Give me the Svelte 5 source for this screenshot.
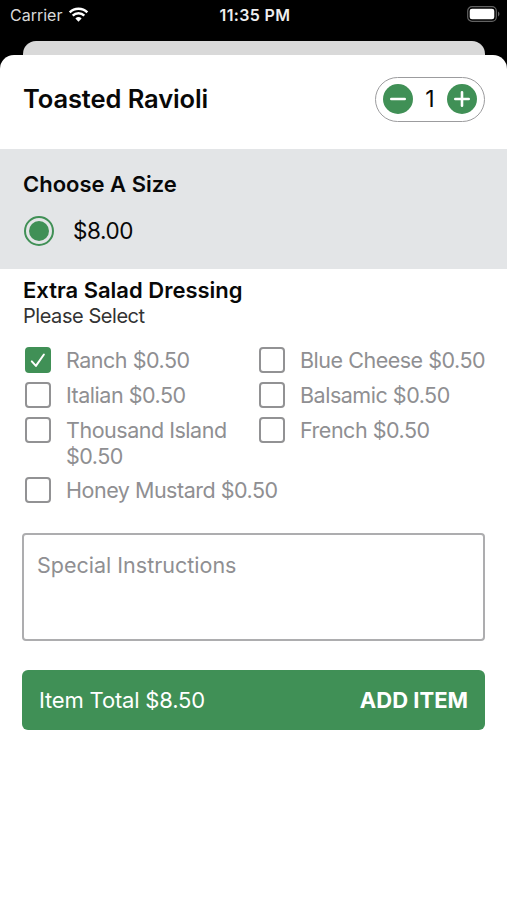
<script>
	let quantity = $state(1);
	let size = $state("regular");
	let instructions = $state("");

	let dressings = $state([
		{ name: "Ranch", price: 0.5, checked: true },
		{ name: "Blue Cheese", price: 0.5, checked: false },
		{ name: "Italian", price: 0.5, checked: false },
		{ name: "Balsamic", price: 0.5, checked: false },
		{ name: "Thousand Island", price: 0.5, checked: false },
		{ name: "French", price: 0.5, checked: false },
		{ name: "Honey Mustard", price: 0.5, checked: false, wide: true }
	]);

	const basePrice = 8;
	let extras = $derived(
		dressings.filter((d) => d.checked).reduce((sum, d) => sum + d.price, 0)
	);
	let total = $derived((basePrice + extras) * quantity);

	const money = (value) => "$" + value.toFixed(2);
</script>

<div class="screen">
	<div class="status">
		<div class="carrier">
			<span>Carrier</span>
			<svg width="21" height="15" viewBox="0 0 20 15">
				<path d="M1.2 5.3a12.6 12.6 0 0 1 17.6 0" />
				<path d="M4.2 8.6a8.3 8.3 0 0 1 11.6 0" />
				<path class="dot" d="M6.9 11.4a4.5 4.5 0 0 1 6.2 0L10 14.7z" />
			</svg>
		</div>
		<span class="time">11:35 PM</span>
		<div class="power">
			<svg width="33" height="16" viewBox="0 0 33 16">
				<rect class="shell" x="0.7" y="0.7" width="28.6" height="14.6" rx="4.3" />
				<rect class="charge" x="2.7" y="2.7" width="24.6" height="10.6" rx="2.3" />
				<path class="charge-tip" d="M31 5.6c1.9.8 1.9 4 0 4.8z" />
			</svg>
		</div>
	</div>
	<div class="behind"></div>

	<div class="sheet">
		<header>
			<h1>Toasted Ravioli</h1>
			<div class="stepper">
				<button aria-label="Remove one" onclick={() => (quantity = Math.max(1, quantity - 1))}>
					<svg width="30" height="30" viewBox="0 0 30 30"><path d="M8.3 15h13.4" /></svg>
				</button>
				<span>{quantity}</span>
				<button aria-label="Add one" onclick={() => (quantity += 1)}>
					<svg width="30" height="30" viewBox="0 0 30 30"><path d="M8.3 15h13.4M15 8.3v13.4" /></svg>
				</button>
			</div>
		</header>

		<section class="sizes">
			<h2>Choose A Size</h2>
			<label>
				<input type="radio" name="size" value="regular" bind:group={size} />
				<span>{money(basePrice)}</span>
			</label>
		</section>

		<section class="extras">
			<h2>Extra Salad Dressing</h2>
			<p>Please Select</p>
			<div class="options">
				{#each dressings as dressing}
					<label class:wide={dressing.wide}>
						<input type="checkbox" bind:checked={dressing.checked} />
						<span class="box">
							{#if dressing.checked}
								<svg width="26" height="26" viewBox="0 0 26 26"><path d="M6.8 14.4l4.1 4.5 8-11.4" /></svg>
							{/if}
						</span>
						<span class="name">{dressing.name} {money(dressing.price)}</span>
					</label>
				{/each}
			</div>
		</section>

		<textarea placeholder="Special Instructions" bind:value={instructions}></textarea>

		<button class="add">
			<span class="total">Item Total {money(total)}</span>
			<strong>ADD ITEM</strong>
		</button>
	</div>
</div>

<style>
	:global(body) {
		background: #000;
	}
	.screen {
		--green: #409056;
		--grey: #8f8f92;
		display: flex;
		flex-direction: column;
		height: 900px;
		background: #000;
		color: #080808;
		font-family: Inter, "Liberation Sans", sans-serif;
		overflow: hidden;
	}
	h1, h2, p {
		margin: 0;
	}
	svg {
		display: block;
		fill: none;
	}
	button {
		border: 0;
		padding: 0;
		font: inherit;
		cursor: pointer;
	}

	.status {
		display: grid;
		grid-template-columns: 1fr auto 1fr;
		align-items: center;
		box-sizing: border-box;
		height: 41px;
		padding: 0 7px 11px 10px;
		color: #fff;
		font-size: 16px;
	}
	.carrier {
		display: flex;
		align-items: center;
		gap: 6px;
		color: #d9d9d9;
	}
	.carrier svg {
		margin-top: -1px;
		stroke: #fff;
		stroke-width: 2.5;
	}
	.carrier .dot {
		fill: #fff;
		stroke: none;
	}
	.time {
		font-weight: 600;
		font-size: 16px;
		letter-spacing: 0.35px;
		color: #eee;
	}
	.power {
		justify-self: end;
		margin-top: -2px;
	}
	.shell {
		stroke: #626262;
		stroke-width: 1.2;
	}
	.charge {
		fill: #fff;
	}
	.charge-tip {
		fill: #626262;
	}

	.behind {
		height: 14px;
		margin: 0 22px 0 23px;
		border-radius: 13px 13px 0 0;
		background: #d9d9d9;
	}
	.sheet {
		flex: 1;
		border-radius: 14px 14px 0 0;
		background: #fff;
	}

	header {
		display: flex;
		align-items: center;
		justify-content: space-between;
		box-sizing: border-box;
		height: 94px;
		padding: 0 22px 6px 23px;
	}
	h1 {
		padding-bottom: 2px;
		font-size: 25.5px;
		font-weight: 600;
		letter-spacing: -0.1px;
	}
	.stepper {
		display: flex;
		align-items: center;
		justify-content: space-between;
		box-sizing: border-box;
		width: 110px;
		height: 45px;
		padding: 0 7px;
		border: 1.5px solid #9c9c9e;
		border-radius: 23px;
		font-size: 23px;
	}
	.stepper button {
		width: 30px;
		height: 30px;
		border-radius: 50%;
		background: var(--green);
	}
	.stepper svg {
		stroke: #fff;
		stroke-width: 2.6;
		stroke-linecap: round;
	}

	h2 {
		font-size: 22px;
		font-weight: 600;
		line-height: 28px;
	}
	.sizes {
		box-sizing: border-box;
		height: 120px;
		padding: 21px 23px 0;
		background: #e3e5e7;
	}
	.sizes label {
		display: flex;
		align-items: center;
		gap: 19px;
		margin-top: 18px;
		padding-left: 1px;
		font-size: 22.5px;
		line-height: 30px;
		letter-spacing: -0.4px;
	}
	.sizes input {
		appearance: none;
		box-sizing: border-box;
		width: 30px;
		height: 30px;
		margin: 0;
		border: 2px solid var(--green);
		border-radius: 50%;
	}
	.sizes input:checked {
		background: var(--green);
		background-clip: content-box;
		padding: 3px;
	}

	.extras {
		padding: 7px 14px 0 23px;
	}
	.extras p {
		font-size: 20px;
		line-height: 24px;
		letter-spacing: -0.45px;
		color: #333;
	}
	.options {
		display: grid;
		grid-template-columns: 234px 1fr;
		row-gap: 9px;
		margin-top: 19px;
		padding-left: 2px;
		color: var(--grey);
		font-size: 21.5px;
		line-height: 26px;
		letter-spacing: -0.48px;
	}
	.options label {
		display: flex;
		gap: 15px;
	}
	.options .wide {
		grid-column: 1 / -1;
		margin-top: -1px;
	}
	.options input {
		position: absolute;
		opacity: 0;
	}
	.box {
		flex: none;
		box-sizing: border-box;
		width: 26px;
		height: 26px;
		border: 2px solid #929294;
		border-radius: 4px;
	}
	.box:has(svg) {
		border: 0;
		background: var(--green);
	}
	.box svg {
		stroke: #fff;
		stroke-width: 2;
		stroke-linecap: round;
		stroke-linejoin: round;
	}
	.name {
		max-width: 190px;
	}
	.wide .name {
		max-width: none;
	}

	textarea {
		display: block;
		box-sizing: border-box;
		width: 463px;
		height: 108px;
		margin: 30px 22px 0;
		padding: 16px 13px;
		border: 2px solid #adadaf;
		border-radius: 4px;
		resize: none;
		font: 21.5px/28px Inter, "Liberation Sans", sans-serif;
	}
	textarea::placeholder {
		color: var(--grey);
	}

	.add {
		display: flex;
		align-items: center;
		justify-content: space-between;
		width: 463px;
		height: 60px;
		margin: 28.5px 22px 0;
		padding: 0 17px;
		border-radius: 6px;
		background: var(--green);
		color: #fff;
		font-size: 22px;
	}
	.total {
		letter-spacing: -0.18px;
	}
	.add strong {
		font-weight: 700;
	}
</style>
